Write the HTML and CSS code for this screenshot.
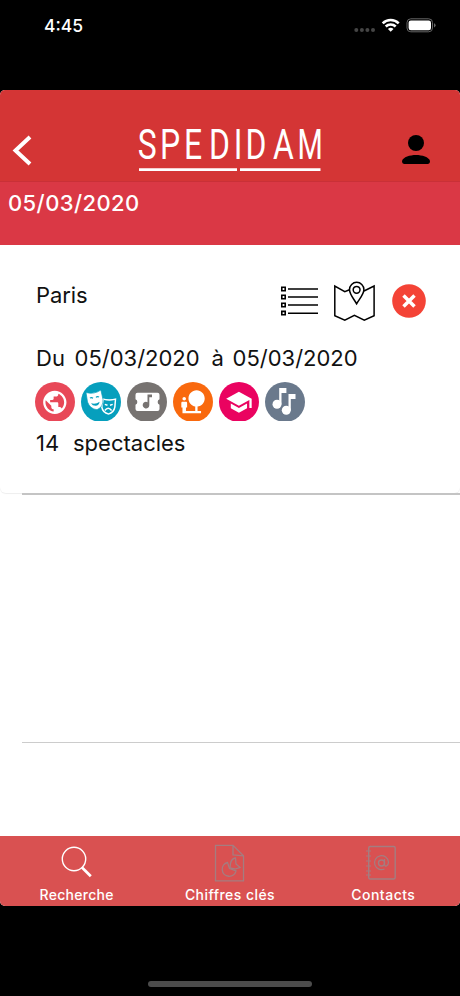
FILE: index.html
```html
<!DOCTYPE html>
<html lang="fr">
<head>
<meta charset="utf-8">
<title>SPEDIDAM</title>
<link rel="stylesheet" href="styles.css">
</head>
<body>
<div class="phone">
  <div class="status">
    <span class="time">4:45</span>
    <svg class="signals" width="84" height="18" viewBox="0 0 84 18">
      <g fill="#454545"><circle cx="4.3" cy="14" r="2"/><circle cx="9.9" cy="14" r="2"/><circle cx="15.4" cy="14" r="2"/><circle cx="21" cy="14" r="2"/></g>
      <g fill="none" stroke="#fff" stroke-width="2.6"><path d="M30.7 7.3a11.3 11.3 0 0 1 16 0"/><path d="M33.7 10.5a7.2 7.2 0 0 1 10 0"/></g>
      <path d="M38.7 15.8l-2.8-2.8a4 4 0 0 1 5.6 0z" fill="#fff"/>
      <rect x="55" y="2.8" width="25.5" height="13" rx="3.8" fill="none" stroke="#666"/>
      <rect x="56.6" y="4.5" width="22.4" height="9.7" rx="2.3" fill="#fff"/>
      <path d="M82 7.2q1.6.6 1.6 2.1T82 11.4z" fill="#666"/>
    </svg>
  </div>
  <div class="app">
    <header class="bar">
      <svg class="back" width="22" height="32" viewBox="0 0 22 32"><path d="M18 3L3.500 16.500 18 30" fill="none" stroke="#fff" stroke-width="4"/></svg>
      <svg class="logo" width="186" height="54" viewBox="0 -8 186 54">
        <g class="logo-text"><text transform="scale(.76 1)" y="33" x="-0.300 28.800 60.400 93.300 126 141.300 177.700">SPEDIDA</text><text transform="scale(.69 1)" y="33" x="231">M</text></g>
        <path d="M1 43.700h98M102 43.700h80.500" stroke="#fff" stroke-width="2.800"/>
      </svg>
      <svg class="user" width="30" height="32" viewBox="0 0 30 32"><circle cx="15" cy="9" r="8"/><path d="M1 27C2 23 9 21 15 21S28 23 29 27Q29 30 26.500 30H3.500Q1 30 1 27z"/></svg>
    </header>
    <div class="date">05/03/2020</div>
    <main class="list">
      <section class="card">
        <div class="row head">
          <span class="city">Paris</span>
          <svg class="menu" width="38" height="32" viewBox="0 0 38 32" fill="none" stroke="#000">
            <path d="M.8 1.300h3.400v3.400H.8zM.8 9.300h3.400v3.400H.8zM.8 17.300h3.400v3.400H.8zM.8 25.400h3.400v3.400H.8z" stroke-width="1.600"/>
            <path d="M7 3H37M7 11H37M7 19H37M7 27.200H37" stroke-width="1.600"/>
          </svg>
          <svg class="map" width="42" height="41" viewBox="0 0 42 41" fill="none" stroke="#000" stroke-width="1.500">
            <path d="M15.500 8.800L10.800 10.700.8 5v29.700l10 4.500 9.600-4.800 9.900 4.800 9.800-4.500V5L30 10"/>
            <path d="M22.600 22.800C20 18 15.500 13.500 15.500 8.500a7.200 7.200 0 0 1 14.400 0c0 5-4.700 9.500-7.300 14.300z"/><circle cx="22.600" cy="8.800" r="3.400"/>
          </svg>
          <svg class="remove" width="34" height="34" viewBox="0 0 34 34"><circle cx="17" cy="17" r="16.800" fill="#f44336"/><path d="M11.500 11.500l11 11M22.500 11.500l-11 11" stroke="#fff" stroke-width="3.500"/></svg>
        </div>
        <div class="row period"><span class="word">Du</span><span class="day">05/03/2020</span><span class="word to">à</span><span class="day">05/03/2020</span></div>
        <div class="kinds">
          <svg class="kind" viewBox="0 0 40 39"><circle cx="20" cy="20" r="20" fill="#e84858"/><path transform="translate(5.800 6.300) scale(1.167)" fill="#fff" d="M12 2C6.480 2 2 6.480 2 12s4.480 10 10 10 10-4.480 10-10S17.520 2 12 2zm-1 17.930c-3.950-.49-7-3.850-7-7.930 0-.62.080-1.210.210-1.790L9 15v1c0 1.100.9 2 2 2v1.930zm6.900-2.540c-.26-.81-1-1.390-1.900-1.390h-1v-3c0-.55-.45-1-1-1H8v-2h2c.55 0 1-.45 1-1V7h2c1.100 0 2-.9 2-2v-.41c2.930 1.190 5 4.060 5 7.410 0 2.080-.8 3.970-2.100 5.390z"/></svg>
          <svg class="kind" viewBox="0 0 40 39"><circle cx="20" cy="20" r="20" fill="#069fbd"/>
            <path fill="#fff" d="M21.500 16.200Q28 18.300 35.300 16.200L34.600 25Q33.500 31.500 27.500 32.800Q21 31.500 20 25z"/>
            <path fill="#069fbd" d="M22.900 17.900Q28 19.500 33.700 18L33.100 25Q32 30 27.500 31.200Q22.500 30 21.500 25z"/>
            <g fill="none" stroke="#fff" stroke-width="1.500"><path d="M23.800 22.400l2.700.8M29 23.200l2.700-.8M23.800 28.500q3.400-4.500 6.800 0"/></g>
            <path fill="#fff" stroke="#069fbd" stroke-width=".7" d="M5 10.500Q13 12.800 19.900 8L22 17.500Q22.500 25 16 27.700Q9 27 6.500 20z"/>
            <g fill="none" stroke="#069fbd" stroke-width="1.200"><path d="M9 16.200q1.300-1.300 3 0M15 15.300q1.300-1.400 3-.2"/></g><path fill="#069fbd" d="M10 21.300q5 1.200 8.600-1.500-.7 4-4 4-3.200 0-4.600-2.500z"/>
          </svg>
          <svg class="kind" viewBox="0 0 40 39"><circle cx="20" cy="20" r="20" fill="#777371"/><path fill="#fff" d="M10.500 10.800h20q2 0 2 2v4.500a2.900 2.900 0 0 0 0 5.400V27q0 2-2 2h-20q-2 0-2-2v-4.300a2.900 2.900 0 0 0 0-5.400v-4.500q0-2 2-2z"/><path fill="#777371" d="M20.500 12.500h4.500v2.800h-2.700v7.900a3.300 3.300 0 1 1-1.800-3z"/></svg>
          <svg class="kind" viewBox="0 0 40 39"><circle cx="20" cy="20" r="20" fill="#f9690e"/><path transform="translate(6 5.800) scale(1.160)" fill="#fff" d="M22.170 9.170c0-3.870-3.130-7-7-7s-7 3.130-7 7c0 3.470 2.520 6.340 5.830 6.890V20H6v-3h1v-4c0-.55-.45-1-1-1H3c-.55 0-1 .45-1 1v4h1v5h16v-2h-3v-3.880c3.470-.41 6.170-3.360 6.170-6.950zM4.500 11c.83 0 1.500-.67 1.500-1.500S5.330 8 4.500 8 3 8.670 3 9.500 3.670 11 4.500 11z"/></svg>
          <svg class="kind" viewBox="0 0 40 39"><circle cx="20" cy="20" r="20" fill="#ea0360"/><path transform="translate(6 6.300) scale(1.160)" fill="#fff" d="M5 13.180v4L12 21l7-3.820v-4L12 17l-7-3.820zM12 3L1 9l11 6 9-4.910V17h2V9L12 3z"/></svg>
          <svg class="kind" viewBox="0 0 40 39"><circle cx="20" cy="20" r="20" fill="#6a798c"/><g fill="#fff"><circle cx="12" cy="22.300" r="4.500"/><path d="M14.200 6h7.200v5h-4.900v11.300h-2.300z"/><circle cx="21.300" cy="28.200" r="4.500"/><path d="M23.500 12h7v5h-4.700v11.200h-2.300z"/></g></svg>
        </div>
        <div class="row count"><span class="word num">14</span><span class="shows">spectacles</span></div>
      </section>
      <div class="empty"></div>
    </main>
    <nav class="tabs">
      <div class="tab"><svg width="40" height="42" viewBox="0 0 40 42" fill="none" stroke="#fff"><circle cx="17" cy="19" r="11.700" stroke-width="1.400"/><path d="M25 27.500l8.800 8.800" stroke-width="2.700"/></svg><span class="label">Recherche</span></div>
      <div class="tab"><svg width="40" height="42" viewBox="0 0 40 42" fill="none" stroke="#a47d80" stroke-width="1.300"><path d="M5.500 5.300h17.500l10.500 10.500v25H5.500zM23 5.300v9.500q5 .5 10.500 1"/><path d="M17.500 22.500a7 7 0 1 0 8.500 8.500l-6.500-2.500z"/><path d="M20.500 23.500q1-5 5-5.500l.5 6 4 3.500-5 1.500-5-1z"/></svg><span class="label figures">Chiffres clés</span></div>
      <div class="tab"><svg class="book" width="40" height="42" viewBox="0 0 40 42" fill="none" stroke="#a47d80" stroke-width="1.400"><rect x="7.700" y="6.500" width="26.500" height="32.500" rx="1.500"/><path d="M5 11h5M5 16h5M5 21h5M5 26h5M5 31h5M5 35h5" stroke-width="1.200"/><circle cx="20.500" cy="23" r="3"/><path d="M23.500 19v5q0 2.500 2 2 2-1 2-4a7 7 0 1 0-4 7" stroke-width="1.200"/></svg><span class="label contacts">Contacts</span></div>
    </nav>
  </div>
  <div class="home"><div class="pill"></div></div>
</div>
</body>
</html>
```

FILE: styles.css
```css
* { box-sizing: border-box; }
body { margin: 0; background: #000; font-family: Inter, sans-serif; }
svg { display: block; flex: none; }
.phone { width: 460px; height: 996px; display: flex; flex-direction: column; background: #000; }
.status { height: 90px; padding: 16px 23px 0 44px; display: flex; justify-content: space-between; align-items: flex-start; color: #fff; }
.time { font-size: 17.5px; line-height: 20px; font-weight: 500; }
.signals { margin-right: 1px; }
.app { height: 816px; display: flex; flex-direction: column; background: #fff; border-radius: 5px; overflow: hidden; }
.bar { height: 92px; background: #d43535; border-bottom: 1px solid #c93037; padding: 28px 29px 0 12px; display: flex; justify-content: space-between; }
.back { margin-top: 16px; }
.logo { margin-left: 7px; margin-right: -20px; overflow: visible; }
.logo-text { font-family: Roboto, sans-serif; font-size: 42px; fill: #fff; }
.user { margin-top: 16px; }
.date { height: 63px; background: #da3845; color: #fff; font-size: 22px; font-weight: 500; line-height: 26px; padding: 8px; letter-spacing: .4px; white-space: nowrap; }
.list { flex: 1; background: #fff; }
.card { height: 248px; border-radius: 0 0 6px 6px; padding: 36px 34px 0 36px; box-shadow: 0 1px 1px #eee; color: #111; font-size: 22px; line-height: 28px; }
.row { display: flex; }
.head { height: 62px; }
.city { flex: 1; letter-spacing: -.1px; }
.menu { margin: 5px 15px 0 0; }
.map { margin-right: 16px; }
.remove { margin-top: 3px; }
.period { height: 39px; padding-top: 1px; }
.word { width: 38.5px; }
.day { width: 137px; }
.to { width: 21px; }
.kinds { display: flex; gap: 6px; margin-left: -1px; }
.kind { width: 40px; height: 39px; }
.count { padding-top: 8px; }
.num { width: 37px; }
.empty { height: 250px; margin-left: 22px; border-top: 2px solid #c4c4c4; border-bottom: 1px solid #ccc; }
.tabs { height: 70px; background: #d95151; display: flex; padding-top: 4px; }
.tab { flex: 1; display: flex; flex-direction: column; align-items: center; }
.label { margin-top: 4px; color: #fff; font-size: 14px; line-height: 17px; font-weight: 500; letter-spacing: .3px; }
.figures { letter-spacing: .45px; }
.contacts { letter-spacing: .5px; }
.book { margin-left: -4px; }
.home { flex: 1; display: flex; justify-content: center; padding-top: 75px; }
.pill { width: 164px; height: 6px; border-radius: 3px; background: #4c4c4c; }
```
